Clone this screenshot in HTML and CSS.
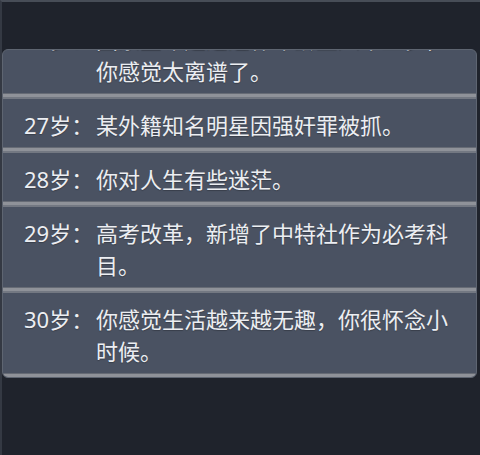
FILE: index.html
```html
<!DOCTYPE html>
<html lang="zh-CN">
<head>
<meta charset="utf-8">
<title>人生记录</title>
<link rel="stylesheet" href="styles.css">
</head>
<body>
<div class="page">
  <div class="topbar"></div>
  <div class="panel">
    <div class="list">
      <div class="item"><span class="age">26岁：</span><span class="text">国家宣布延迟退休年龄至八十五岁，你感觉太离谱了。</span></div>
      <div class="sep"></div>
      <div class="item"><span class="age">27岁：</span><span class="text">某外籍知名明星因强奸罪被抓。</span></div>
      <div class="sep"></div>
      <div class="item"><span class="age">28岁：</span><span class="text">你对人生有些迷茫。</span></div>
      <div class="sep"></div>
      <div class="item"><span class="age">29岁：</span><span class="text">高考改革，新增了中特社作为必考科目。</span></div>
      <div class="sep"></div>
      <div class="item"><span class="age">30岁：</span><span class="text">你感觉生活越来越无趣，你很怀念小时候。</span></div>
      <div class="sep"></div>
    </div>
  </div>
</div>
</body>
</html>
```
FILE: styles.css
```css
html, body {
  margin: 0;
  padding: 0;
  background: #1f232c;
}

.page {
  box-sizing: border-box;
  width: 480px;
  height: 455px;
  border-top: 2px solid #474d57;
  border-left: 2px solid #343943;
  background: #1f232c;
  font-family: "Noto Sans", "Noto Sans CJK SC", sans-serif;
  color: #eceef2;
}

.topbar {
  height: 47px;
}

.panel {
  box-sizing: border-box;
  height: 329px;
  margin-right: 3px;
  border: 1px solid #5e6571;
  border-radius: 6px;
  background: #4a5262;
  overflow: hidden;
}

.list {
  margin-top: -37px;
}

.item {
  display: flex;
  padding: 10px 20px 6px 21px;
  font-size: 22px;
  line-height: 32px;
  text-shadow: 0 1px 1px rgba(0, 0, 0, 0.25);
}

.age {
  flex: 0 0 72px;
  white-space: nowrap;
}

.text {
  flex: 1 1 auto;
  min-width: 0;
}

.sep {
  height: 6px;
  background: linear-gradient(#666b75 0, #666b75 1px, #8f9299 1px, #8f9299 4px, #737882 4px, #737882 6px);
}
```
